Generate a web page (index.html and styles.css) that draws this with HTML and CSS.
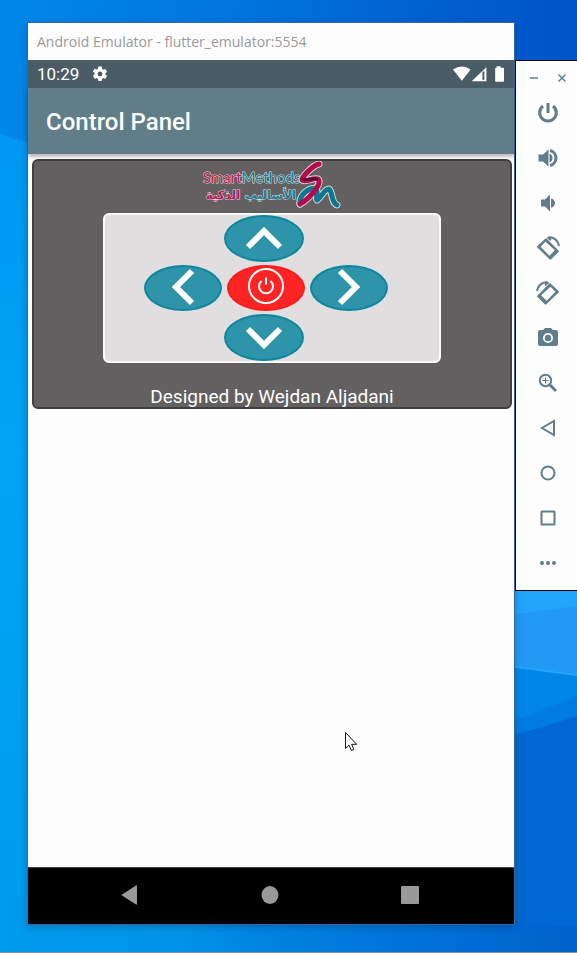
FILE: index.html
```html
<!DOCTYPE html>
<html lang="en">
<head>
<meta charset="utf-8">
<meta name="viewport" content="width=device-width, initial-scale=1">
<title>Android Emulator</title>
<link rel="stylesheet" href="styles.css">
</head>
<body>
<svg class="wallpaper" viewBox="0 0 577 953" preserveAspectRatio="none" aria-hidden="true">
  <defs>
    <linearGradient id="sky" x1="0" y1="0" x2="1" y2="0">
      <stop offset="0" stop-color="#0088e8"/><stop offset=".4" stop-color="#0076de"/>
      <stop offset=".75" stop-color="#0060d0"/><stop offset="1" stop-color="#0054c8"/>
    </linearGradient>
    <linearGradient id="left" x1="0" y1="0" x2="0" y2="1">
      <stop offset="0" stop-color="#0097f2"/><stop offset=".4" stop-color="#00a3f5"/><stop offset="1" stop-color="#009ced"/>
    </linearGradient>
    <linearGradient id="floor" x1="0" y1="0" x2="1" y2="0">
      <stop offset="0" stop-color="#009bed"/><stop offset=".3" stop-color="#0094ea"/>
      <stop offset=".45" stop-color="#0084e2"/><stop offset=".65" stop-color="#0076da"/><stop offset="1" stop-color="#0062cc"/>
    </linearGradient>
  </defs>
  <path fill="url(#sky)" d="M0 0h577v953H0z"/>
  <path fill="url(#left)" d="M0 134l60 20v760H0z"/>
  <path fill="url(#floor)" d="M0 895h577v58H0z"/>
  <path fill="#24a5fc" d="M500 560h77v48l-77 10z"/>
  <path fill="#2299f4" d="M500 616l77-10v70l-77-10z"/>
  <path fill="#0086e6" d="M500 665l77 9v30l-77 34z"/>
  <path fill="#007be0" d="M500 726l77-30v24l-77 24z"/>
  <path fill="#0068d0" d="M500 740l77-24v210h-77z"/>
  <path stroke="#22a5fc" stroke-width="2" d="M500 665l77 10"/>
  <path fill="#8a94a0" d="M0 952h577v1H0z"/>
</svg>

<main class="desktop">
  <section class="window">
    <header class="titlebar">Android Emulator - flutter_emulator:5554</header>
    <div class="status">
      <span>10:29</span>
      <svg class="gear" viewBox="0 0 24 24" aria-hidden="true"><path d="M19.140 12.940c.04-.3.060-.61.060-.94 0-.32-.02-.64-.07-.94l2.030-1.580a.49.49 0 0 0 .12-.61l-1.920-3.320a.49.49 0 0 0-.59-.22l-2.390.96a7 7 0 0 0-1.620-.94l-.36-2.540A.48.48 0 0 0 13.920 2h-3.840a.48.48 0 0 0-.47.41l-.36 2.540a7 7 0 0 0-1.620.94l-2.390-.96a.48.48 0 0 0-.59.22L2.740 8.470a.48.48 0 0 0 .12.610l2.030 1.580a7 7 0 0 0 0 1.880l-2.030 1.580a.49.49 0 0 0-.12.610l1.920 3.320c.12.22.37.290.59.220l2.390-.96c.5.380 1.030.7 1.620.94l.36 2.540c.05.24.240.410.480.410h3.840c.24 0 .44-.17.470-.41l.36-2.540a7 7 0 0 0 1.620-.94l2.390.96c.22.080.470 0 .590-.22l1.920-3.320a.48.48 0 0 0-.12-.61zM12 15.200a3.200 3.200 0 1 1 0-6.400 3.200 3.200 0 0 1 0 6.400z"/></svg>
      <svg class="signals" viewBox="0 0 52 16" aria-hidden="true">
        <path d="M0 3.500Q9-3 18 3.500L9 15z"/>
        <path d="M19 15.500L34 1v14.500z"/>
        <path class="bar" d="M31 5.500V14"/>
        <path d="M44.500 0h4v1.500H51q1 0 1 1V15q0 1-1 1h-7q-1 0-1-1V2.500q0-1 1-1h.5z"/>
      </svg>
    </div>
    <header class="appbar"><h1>Control Panel</h1></header>

    <div class="content">
      <section class="card">
        <svg class="logo" viewBox="0 0 138 48" role="img" aria-label="SmartMethods">
          <text class="latin" x="0" y="22"><tspan class="pink">Smart</tspan><tspan class="teal">Methods</tspan></text>
          <text class="arabic" x="93" y="38" direction="rtl"><tspan class="teal">الأساليب</tspan><tspan class="pink"> الذكية</tspan></text>
          <g class="ribbon halo"><path d="M116 3C110 4 98 17 99 19C102 22 111 16 115 18C120 23 105 39 97 43"/><path d="M97 43C96 33 107 26 113 28C116 32 112 38 114 39C118 37 121 28 126 28C130 31 128 42 134 44"/></g>
          <path class="ribbon stroke-teal" d="M97 43C96 33 107 26 113 28C116 32 112 38 114 39C118 37 121 28 126 28C130 31 128 42 134 44"/>
          <path class="ribbon stroke-pink" d="M116 3C110 4 98 17 99 19C102 22 111 16 115 18C120 23 105 39 97 43"/>
          <path class="ribbon shade" d="M100 18C103 20 109 17 114 18"/>
        </svg>
        <div class="pad">
          <div class="row">
            <button class="key key-wide" aria-label="Forward"><svg viewBox="0 0 40 40"><path d="M4 28L20 12l16 16"/></svg></button>
          </div>
          <div class="row middle">
            <button class="key" aria-label="Left"><svg viewBox="0 0 40 40"><path d="M29 3L13 19l16 16"/></svg></button>
            <button class="key stop" aria-label="Power"><svg viewBox="0 0 40 40"><circle cx="20" cy="18" r="17"/><path d="M15.500 13a7 7 0 1 0 9 0M20 9.500v7"/></svg></button>
            <button class="key" aria-label="Right"><svg viewBox="0 0 40 40"><path d="M11 3l16 16-16 16"/></svg></button>
          </div>
          <div class="row">
            <button class="key key-wide" aria-label="Backward"><svg viewBox="0 0 40 40"><path d="M4 11l16 16 16-16"/></svg></button>
          </div>
        </div>
        <p class="credit">Designed by Wejdan Aljadani</p>
      </section>
    </div>

    <nav class="navbar">
      <button aria-label="Back"><svg viewBox="0 0 20 20"><path d="M17 1v18q0 1-1 .5L2 10.500q-1-.5 0-1L16 .5q1-.5 1 .5z"/></svg></button>
      <button aria-label="Home"><svg viewBox="0 0 20 20"><ellipse cx="10" cy="10" rx="8.500" ry="9"/></svg></button>
      <button aria-label="Overview"><svg viewBox="0 0 20 20"><rect x="1" y="1" width="18" height="18" rx="1"/></svg></button>
    </nav>
  </section>

  <aside class="tools">
    <div class="tools-head">
      <button aria-label="Minimize"><svg viewBox="0 0 10 10"><path d="M1 5h8"/></svg></button>
      <button aria-label="Close"><svg viewBox="0 0 10 10"><path d="M1.500 1.500l7 7M8.500 1.500l-7 7"/></svg></button>
    </div>
    <button aria-label="Power"><svg viewBox="0 0 24 24"><path class="heavy" d="M12 2v10M7 5a8.300 8.300 0 1 0 10 0"/></svg></button>
    <button aria-label="Volume up"><svg viewBox="0 0 24 24"><path d="M2.500 8.500v7H7l5.500 5V3.500L7 8.500zm14 3.500A4.500 4.500 0 0 0 13.500 7.600v8.800a4.500 4.500 0 0 0 3-4.400z"/><path class="heavy" d="M14 4.500a7.700 7.700 0 0 1 0 15"/></svg></button>
    <button aria-label="Volume down"><svg viewBox="0 0 24 24"><path d="M5 8.500v7h4l5 5V3.500l-5 5zm14 3.500a4.800 4.800 0 0 0-4-4.500v9a4.800 4.800 0 0 0 4-4.500z"/></svg></button>
    <button aria-label="Rotate left"><svg viewBox="0 0 24 24"><path fill-rule="evenodd" d="M9.200 2.700q.8-.8 1.600 0L22.500 14.400q.8.800 0 1.600l-7.300 7.300q-.8.800-1.600 0L1.400 11.600q-.8-.8 0-1.600zM9.500 5.800L4.500 10.800 13.400 19.700l5.500-5.500z"/><path class="line" d="M12 1.500C17 .5 22 4 23 10M11.500 1.200l3.500 3"/></svg></button>
    <button aria-label="Rotate right"><svg viewBox="0 0 24 24"><g transform="matrix(-1 0 0 1 24 0)"><path fill-rule="evenodd" d="M9.200 2.700q.8-.8 1.600 0L22.500 14.400q.8.800 0 1.600l-7.300 7.300q-.8.800-1.600 0L1.400 11.600q-.8-.8 0-1.600zM9.500 5.800L4.500 10.800 13.400 19.700l5.500-5.500z"/><path class="line" d="M12 1.500C17 .5 22 4 23 10M11.500 1.200l3.500 3"/></g></svg></button>
    <button aria-label="Take screenshot"><svg viewBox="0 0 24 24"><circle cx="12" cy="12" r="3.200"/><path d="M9 2L7.170 4H4a2 2 0 0 0-2 2v12c0 1.100.9 2 2 2h16a2 2 0 0 0 2-2V6a2 2 0 0 0-2-2h-3.170L15 2zm3 15a5 5 0 1 1 0-10 5 5 0 0 1 0 10z"/></svg></button>
    <button aria-label="Zoom"><svg viewBox="0 0 24 24"><circle class="line" cx="9.500" cy="9.500" r="5.700"/><path class="heavy" d="M14 14l6 6"/><path d="M12.500 10H10v2.500H9V10H6.500V9H9V6.500h1V9h2.500z"/></svg></button>
    <button aria-label="Back"><svg viewBox="0 0 24 24"><path class="outline" d="M18 5v14L6 12z"/></svg></button>
    <button aria-label="Home"><svg viewBox="0 0 24 24"><circle class="outline" cx="12" cy="12" r="6.500"/></svg></button>
    <button aria-label="Overview"><svg viewBox="0 0 24 24"><rect class="outline" x="5.500" y="5.500" width="13" height="13" rx=".5"/></svg></button>
    <button aria-label="More"><svg viewBox="0 0 24 24"><circle cx="6" cy="12" r="2"/><circle cx="12" cy="12" r="2"/><circle cx="18" cy="12" r="2"/></svg></button>
  </aside>
</main>

<svg class="pointer" viewBox="0 0 13 20" aria-hidden="true"><path d="M.5.500v16l3.500-3.300 2.500 5.300 2.400-1-2.300-5.200h5z"/></svg>
</body>
</html>
```
FILE: styles.css
```css
* { box-sizing: border-box; }

body {
  margin: 0;
  font-family: Roboto, "Liberation Sans", sans-serif;
  background: #0078dc;
}

button {
  display: flex;
  align-items: center;
  justify-content: center;
  margin: 0;
  padding: 0;
  border: 0;
  background: none;
  cursor: pointer;
}

svg { display: block; flex: none; }

.wallpaper {
  position: absolute;
  inset: 0;
  z-index: -1;
  width: 100%;
  height: 100%;
}

.desktop {
  display: flex;
  gap: 1px;
  min-height: 100vh;
  padding: 23px 0 29px 28px;
}

.window {
  display: flex;
  flex: 1;
  flex-direction: column;
  min-width: 0;
  background: #fdfdfd;
  box-shadow: 0 0 0 1px #3068a0, 0 2px 8px rgba(0, 40, 90, .4);
}

.titlebar {
  padding: 0 9px;
  font: 14px/37px "Open Sans", "Noto Sans", sans-serif;
  color: #999;
}

.status {
  display: flex;
  align-items: center;
  gap: 12px;
  height: 28px;
  padding: 0 10px 0 9px;
  font-size: 17px;
  color: #fff;
  background: #4a5c66;
}

.status svg { fill: #fff; }
.gear { width: 18px; height: 18px; }
.signals { width: 51px; height: 16px; margin-left: auto; }
.signals .bar { stroke: #4a5c66; stroke-width: 2; }

.appbar {
  z-index: 1;
  display: flex;
  align-items: center;
  height: 66px;
  padding: 2px 18px 0;
  color: #fff;
  background: #607d88;
  box-shadow: 0 3px 3px rgba(0, 0, 0, .25);
}

.appbar h1 { margin: 0; font-size: 24px; font-weight: 500; }

.content { flex: 1; padding: 5px 2px 5px 4px; }

.card {
  display: flex;
  flex-direction: column;
  align-items: center;
  border: 2px solid #413f40;
  border-radius: 6px;
  background: #636061;
}

.logo { width: 138px; height: 48px; }
.latin { font: 15px Lato, sans-serif; }
.arabic { font: bold 12px "DejaVu Sans", sans-serif; }
.logo text { stroke: #ddd; stroke-width: 1px; paint-order: stroke; }
.pink { fill: #c01858; }
.teal { fill: #187e98; }
.ribbon { fill: none; stroke-width: 5; stroke-linecap: round; stroke-linejoin: round; }
.halo { stroke: #d5d5d5; stroke-width: 7; }
.stroke-pink { stroke: #b8084c; }
.stroke-teal { stroke: #0c7890; }
.shade { stroke: #5a0830; stroke-width: 3; }

.pad {
  display: flex;
  flex-direction: column;
  gap: 3px;
  width: 71%;
  margin-top: 4px;
  padding: 0 12px 0 0;
  border: 2px solid #fafafa;
  border-radius: 6px;
  background: #e0dedf;
}

.row { display: flex; justify-content: center; gap: 5px; padding-right: 4px; }
.row.middle { padding: 0; }

.key {
  width: 78px;
  height: 46px;
  border: 2px solid #0e86a0;
  border-radius: 50%;
  background: #2e94aa;
}

.key-wide { width: 80px; height: 47px; }
.key svg { width: 40px; height: 40px; fill: none; stroke: #fff; stroke-width: 6; }
.stop { border-color: #fb1d1d; background: #ff2424; }
.stop svg { stroke-width: 2; }

.credit { margin: 23px 0 0; font-size: 19px; line-height: 21px; color: #fff; }

.navbar {
  display: flex;
  justify-content: space-around;
  height: 57px;
  padding: 0 34px 2px 32px;
  border-top: 1px solid #444;
  background: #000;
}

.navbar button { width: 60px; }
.navbar svg { width: 20px; height: 20px; fill: #999; }

.tools {
  flex: none;
  align-self: flex-start;
  width: 62px;
  margin-top: 37px;
  padding: 0 0 5px 2px;
  border: 1px solid #000;
  border-right: 0;
  background: #fdfdfd;
}

.tools > button { width: 100%; height: 45px; }
.tools > button svg { width: 24px; height: 24px; fill: #607d8b; }
.tools .line, .tools .outline, .tools .heavy { fill: none; stroke: #607d8b; stroke-width: 2; }
.tools .heavy { stroke-width: 3; }
.tools-head { display: flex; justify-content: center; gap: 18px; height: 29px; padding-top: 5px; }
.tools-head svg { width: 10px; height: 10px; stroke: #607d8b; stroke-width: 1.5; }

.pointer {
  position: absolute;
  top: 732px;
  left: 345px;
  width: 13px;
  height: 20px;
  fill: #fff;
  stroke: #111;
}
```
